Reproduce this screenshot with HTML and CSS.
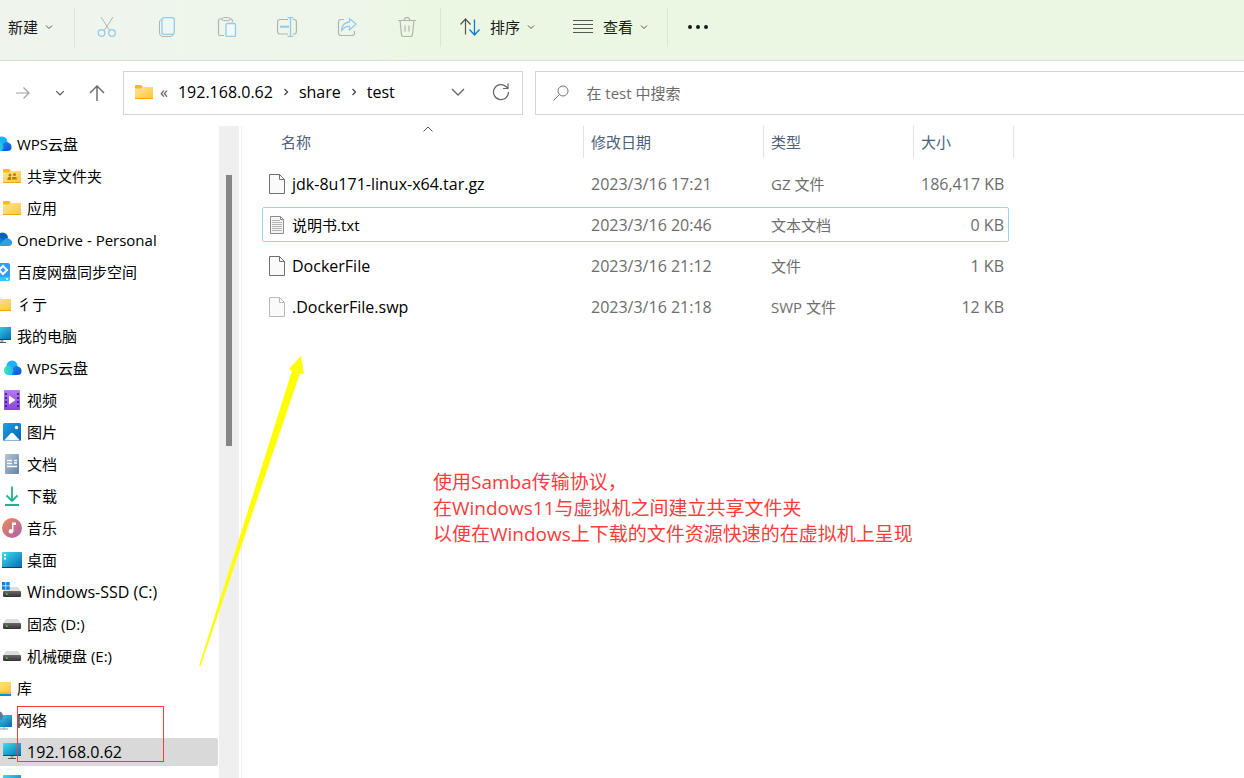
FILE: index.html
```html
<!DOCTYPE html>
<html lang="zh-CN">
<head>
<meta charset="utf-8">
<title>test</title>
<link rel="stylesheet" href="styles.css">
</head>
<body>
<svg class="defs" aria-hidden="true">
  <defs>
    <linearGradient id="gFolder" x1="0" y1="0" x2="1" y2="1"><stop offset="0" stop-color="#ffe69a"/><stop offset="1" stop-color="#ffc536"/></linearGradient>
    <linearGradient id="gScreen" x1="0" y1="0" x2="1" y2="1"><stop offset="0" stop-color="#3ce0e8"/><stop offset="1" stop-color="#0867b8"/></linearGradient>
    <linearGradient id="gVideo" x1="0" y1="0" x2="0" y2="1"><stop offset="0" stop-color="#b57bf0"/><stop offset="1" stop-color="#8645dc"/></linearGradient>
    <linearGradient id="gPic" x1="0" y1="0" x2="1" y2="1"><stop offset="0" stop-color="#1c9fe8"/><stop offset="1" stop-color="#0763b4"/></linearGradient>
    <linearGradient id="gDoc" x1="0" y1="0" x2="1" y2="1"><stop offset="0" stop-color="#b3c6da"/><stop offset="1" stop-color="#6582a4"/></linearGradient>
    <linearGradient id="gMusic" x1="0" y1="0" x2="1" y2="1"><stop offset="0" stop-color="#f08c4e"/><stop offset="1" stop-color="#a95fb5"/></linearGradient>
    <linearGradient id="gWpsL" x1="0" y1="0" x2="1" y2="0"><stop offset="0" stop-color="#3fe8b8"/><stop offset="1" stop-color="#16b9f5"/></linearGradient>
    <linearGradient id="gWpsR" x1="0" y1="0" x2="1" y2="1"><stop offset="0" stop-color="#1a8cff"/><stop offset="1" stop-color="#0a4fd8"/></linearGradient>
    <linearGradient id="gDrive" x1="0" y1="0" x2="0" y2="1"><stop offset="0" stop-color="#6a6a6a"/><stop offset="1" stop-color="#333"/></linearGradient>
  </defs>
  <symbol id="chevron-down" viewBox="0 0 8 8"><path d="M1 2.500 4 5.500 7 2.500" fill="none" stroke="currentColor"/></symbol>
  <symbol id="chevron-right" viewBox="0 0 8 8"><path d="M2.500 1 5.500 4 2.500 7" fill="none" stroke="currentColor" stroke-width="1.300"/></symbol>
  <symbol id="folder" viewBox="0 0 20 20"><path d="M1 4q0-1 1-1h5l2 2h-1v3H1z" fill="#f9b91c"/><path d="M1 6.500h6L8.500 5H19v12H1z" fill="url(#gFolder)"/><path d="M1 16.500h18" stroke="#eda71e"/></symbol>
  <symbol id="monitor" viewBox="0 0 20 20"><path d="M1 1h18v13H1z" fill="url(#gScreen)"/><path d="M1 13.500h18" stroke="#07518f"/><path d="M8.500 14h3v2h-3z" fill="#9aa3aa"/><path d="M6 16.500h8" stroke="#555"/></symbol>
  <symbol id="wps" viewBox="0 0 20 20"><circle cx="10" cy="8" r="5.500" fill="#1fb0fa"/><path d="M10 17 8 13l5-5q6 0 6.500 4.500T15 17z" fill="url(#gWpsR)"/><path d="M5.500 7.500A5 5 0 0 0 5.500 17h4q2.500-3 2-5Q10 7.500 5.500 7.500z" fill="url(#gWpsL)"/></symbol>
  <symbol id="drive" viewBox="0 0 20 20"><path d="M4 5h12l3 5H1z" fill="#dcdde0"/><rect x="1" y="9" width="18" height="6" rx="1" fill="url(#gDrive)"/><path d="M4 12h1.500" stroke="#54e35b" stroke-width="1.500"/></symbol>
  <symbol id="file" viewBox="0 0 16 20"><path d="M.5.5h10l5 5v14H.5z" fill="#fafafa" stroke="currentColor"/><path d="M10.500.5v5h5" fill="none" stroke="currentColor"/></symbol>
</svg>

<div class="toolbar">
  <button class="tool tool-new">新建<svg class="chev"><use href="#chevron-down"/></svg></button>
  <span class="divider"></span>
  <div class="tool-group">
    <button class="tool icon-only" aria-label="剪切"><svg viewBox="0 0 20 20"><g fill="none"><path d="M4 0 13 14M16 0 7 14" stroke="#b3b3ae"/><circle cx="4.500" cy="16" r="3.300" stroke="#93cbec" stroke-width="1.300"/><circle cx="15" cy="16" r="3.300" stroke="#93cbec" stroke-width="1.300"/></g></svg></button>
    <button class="tool icon-only" aria-label="复制"><svg viewBox="0 0 20 20"><path d="M4.500 2.500Q2.500 3 2.500 5v10q0 4.500 4 4.500h7q2 0 2.500-2" fill="none" stroke="#b3b3ae"/><rect x="5" y=".7" width="12.300" height="16.600" rx="2" fill="#eef7f6" stroke="#93cbec" stroke-width="1.300"/></svg></button>
    <button class="tool icon-only" aria-label="粘贴"><svg viewBox="0 0 20 20"><g fill="none"><path d="M7 18.500H3q-1.500 0-1.500-1.500V3.500Q1.500 2 3 2h2m8 0h1q1.500 0 1.500 3" stroke="#b3b3ae" stroke-width="1.200"/><rect x="5" y=".6" width="8" height="3" rx="1.500" stroke="#b3b3ae"/><rect x="9" y="6.500" width="9.500" height="13" rx="1.500" fill="#f3f9f8" stroke="#93cbec" stroke-width="1.300"/></g></svg></button>
    <button class="tool icon-only" aria-label="重命名"><svg viewBox="0 0 20 20"><g fill="none"><path d="M11 2.500H3Q.6 2.500.6 5v9.500Q.6 17 3 17h8M16 2.500h1q2.400 0 2.400 2.500v9.500q0 2.500-2.400 2.500h-1" stroke="#b3b3ae" stroke-width="1.200"/><path d="M3 9.700h9" stroke="#93cbec" stroke-width="2"/><path d="M13.500.5v19M10.500.6h6M10.500 19.400h6" stroke="#93cbec" stroke-width="1.300"/></g></svg></button>
    <button class="tool icon-only" aria-label="共享"><svg viewBox="0 0 20 20"><g fill="none"><path d="M7 2.500H4Q1.500 2.500 1.500 5v11q0 2.500 2.500 2.500h11q2.500 0 2.500-2.500v-2" stroke="#b3b3ae" stroke-width="1.200"/><path d="M12.500 1.500 19 7l-6.500 6V9.500Q7.500 9 4.500 14 5 5.500 12.500 5z" stroke="#93cbec" stroke-width="1.300" stroke-linejoin="round"/></g></svg></button>
    <button class="tool icon-only" aria-label="删除"><svg viewBox="0 0 20 20"><path d="M1 3.500h18M3 3.500l1.500 14q.2 2 2 2h7q1.800 0 2-2L17 3.500M7 3.500Q7 .6 10 .6t3 2.900M8 8.500v6M12 8.500v6" fill="none" stroke="#b3b3ae" stroke-width="1.200"/></svg></button>
  </div>
  <span class="divider"></span>
  <button class="tool labelled"><svg viewBox="0 0 20 20"><path d="M5.500 17.500V2.500M.5 7.500l5-5.500 5 5.500" fill="none" stroke="#555" stroke-width="1.200"/><path d="M14.500 2.500v15M9.500 12.500l5 5.500 5-5.500" fill="none" stroke="#0b7bd6" stroke-width="1.300"/></svg>排序<svg class="chev"><use href="#chevron-down"/></svg></button>
  <button class="tool labelled"><svg viewBox="0 0 20 20"><path d="M0 3.500h20M0 7.500h20M0 11.500h20M0 15.500h20" stroke="#555"/></svg>查看<svg class="chev"><use href="#chevron-down"/></svg></button>
  <span class="divider"></span>
  <button class="tool icon-only" aria-label="更多"><svg viewBox="0 0 20 20"><g fill="#1a1a1a"><circle cx="2" cy="10" r="2"/><circle cx="10" cy="10" r="2"/><circle cx="18" cy="10" r="2"/></g></svg></button>
</div>

<div class="navbar">
  <div class="nav-buttons">
    <button class="nav" aria-label="前进"><svg width="16" height="16" viewBox="0 0 16 16"><path d="M1 8h13M8.500 2.500 14 8l-5.500 5.500" fill="none" stroke="#a0a0a0" stroke-width="1.200"/></svg></button>
    <button class="nav" aria-label="最近的位置"><svg width="10" height="10"><use href="#chevron-down"/></svg></button>
    <button class="nav" aria-label="向上"><svg width="16" height="16" viewBox="0 0 16 16"><path d="M8 16V1M1 8l7-7 7 7" fill="none" stroke="#666" stroke-width="1.400"/></svg></button>
  </div>
  <nav class="address" aria-label="地址">
    <svg class="icon"><use href="#folder"/></svg>
    <span class="back">«</span>
    <a href="#">192.168.0.62</a><svg class="sep"><use href="#chevron-right"/></svg>
    <a href="#">share</a><svg class="sep"><use href="#chevron-right"/></svg>
    <a href="#">test</a>
    <button class="addr-btn drop" aria-label="历史记录"><svg width="14" height="14" viewBox="0 0 14 14"><path d="M1 4l6 6 6-6" fill="none" stroke="#666" stroke-width="1.300"/></svg></button>
    <button class="addr-btn" aria-label="刷新"><svg width="18" height="18" viewBox="0 0 18 18"><path d="M16.500 9A7.500 7.500 0 1 1 14 3.500L16 5.500M16 .5v5h-5" fill="none" stroke="#666" stroke-width="1.200"/></svg></button>
  </nav>
  <label class="search">
    <svg width="16" height="16" viewBox="0 0 16 16"><circle cx="10" cy="6" r="5" fill="none" stroke="#777"/><path d="M6.500 9.500.5 15.500" stroke="#777"/></svg>
    <input type="search" placeholder="在 test 中搜索" aria-label="在 test 中搜索">
  </label>
</div>

<div class="main">
  <aside class="sidebar">
    <ul class="tree">
      <li class="root"><svg class="icon"><use href="#wps"/></svg>WPS云盘</li>
      <li><svg class="icon" viewBox="0 0 20 20"><use href="#folder" width="20" height="20"/><g fill="#b87a12"><circle cx="8" cy="9" r="1.500"/><circle cx="12.500" cy="8.500" r="1.500"/><path d="M5.500 14v-1.500q0-1.500 1.500-1.500h2v3zM10 13.500V11h3.500q1.500 0 1.500 2.500z"/></g></svg>共享文件夹</li>
      <li><svg class="icon"><use href="#folder"/></svg>应用</li>
      <li class="root"><svg class="icon" viewBox="0 0 20 20"><path d="M5 8a5.500 5.500 0 0 1 11 0l-4 4z" fill="#0a62ba"/><path d="M5 16a4.500 4.500 0 0 1 0-9q4 0 7 4l-3 5z" fill="#0d7fd4"/><path d="M5 16l8-7q1.500-1.500 3.500-.5Q20 9.500 20 12.500 20 16 16.500 16z" fill="#28a0e8"/></svg>OneDrive - Personal</li>
      <li class="root"><svg class="icon" viewBox="0 0 20 20"><rect x="0" y="1" width="18" height="18" rx="2" fill="#2f9bff"/><path d="M0 15h18v2q0 2-2 2H2q-2 0-2-2z" fill="#35c8f5"/><path d="M7 8l4-4 4 4-4 4z" fill="none" stroke="#fff" stroke-width="2"/><circle cx="15" cy="17" r="1" fill="#fff"/></svg>百度网盘同步空间</li>
      <li class="root"><svg class="icon"><use href="#folder"/></svg>彳亍</li>
      <li class="root"><svg class="icon"><use href="#monitor"/></svg>我的电脑</li>
      <li><svg class="icon"><use href="#wps"/></svg>WPS云盘</li>
      <li><svg class="icon" viewBox="0 0 20 20"><rect x="2" width="16" height="20" rx="1" fill="url(#gVideo)"/><path d="M4 3v14M16 3v14" stroke="#4a2391" stroke-width="2" stroke-dasharray="2 2"/><path d="M7 5.500 13.500 10 7 14.500z" fill="#fff"/></svg>视频</li>
      <li><svg class="icon" viewBox="0 0 20 20"><rect x="1" y="1" width="18" height="18" rx="1.500" fill="url(#gPic)"/><path d="M2 18.500 8.500 11.500q1.500-1.500 3 0L18 18.500z" fill="#f7fbff"/><circle cx="14.500" cy="5.500" r="1.700" fill="#fff"/></svg>图片</li>
      <li><svg class="icon" viewBox="0 0 20 20"><rect x="3" width="14" height="20" rx="1" fill="url(#gDoc)"/><path d="M5 6.500h5M5 9.500h5M5 12.500h10M12 6.500h3M12 9h3" stroke="#fff" stroke-width="1.500"/></svg>文档</li>
      <li><svg class="icon" viewBox="0 0 20 20"><path d="M10 .5V15M4.500 9.500 10 15l5.500-5.500M3 19h14" fill="none" stroke="#20b28f" stroke-width="1.800"/></svg>下载</li>
      <li><svg class="icon" viewBox="0 0 20 20"><circle cx="10" cy="10" r="10" fill="url(#gMusic)"/><path d="M10 4.500h4v2.500h-2.500V13H10z" fill="#fff"/><circle cx="9" cy="13.300" r="2.300" fill="#fff"/></svg>音乐</li>
      <li><svg class="icon" viewBox="0 0 20 20"><rect y="2" width="20" height="16" rx="1" fill="url(#gScreen)"/><path d="M0 17.500h20" stroke="#073f75"/><path d="M3 4v2M3 7.500v2" stroke="#fff" stroke-width="2"/></svg>桌面</li>
      <li class="latin"><svg class="icon" viewBox="0 0 20 20"><use href="#drive" width="20" height="20"/><path d="M0 0h3.500v3.500H0zM4.200 0h3.500v3.500H4.200zM0 4.200h3.500v3.500H0zM4.200 4.200h3.500v3.500H4.200z" fill="#0d86dc"/></svg>Windows-SSD (C:)</li>
      <li><svg class="icon"><use href="#drive"/></svg>固态 (D:)</li>
      <li><svg class="icon"><use href="#drive"/></svg>机械硬盘 (E:)</li>
      <li class="root"><svg class="icon" viewBox="0 0 20 20"><path d="M1 4h18v12H1z" fill="url(#gFolder)"/><path d="M1 15h18" stroke="#eda71e"/><path d="M1 17h18" stroke="#1787cf" stroke-width="2"/></svg>库</li>
      <li class="root"><svg class="icon" viewBox="0 0 20 20"><path d="M3 5h17v12H3z" fill="url(#gScreen)"/><path d="M7 19h9M12 17v2" stroke="#8c969e"/><circle cx="6" cy="6" r="5" fill="#527f9c"/></svg>网络</li>
      <li class="selected latin"><svg class="icon"><use href="#monitor"/></svg>192.168.0.62</li>
      <li><svg class="icon"><use href="#monitor"/></svg></li>
    </ul>
    <div class="scrollbar"><div class="thumb"></div></div>
    <div class="callout-box"></div>
  </aside>

  <section class="content">
    <table class="files">
      <colgroup><col class="c-name"><col class="c-date"><col class="c-type"><col class="c-size"></colgroup>
      <thead>
        <tr><th class="name">名称<svg class="sorted" viewBox="0 0 10 6"><path d="M.5 5.500 5 1l4.500 4.500" fill="none" stroke="#555"/></svg></th><th>修改日期</th><th>类型</th><th>大小</th></tr>
      </thead>
      <tbody>
        <tr><td class="latin"><span class="file"><svg><use href="#file"/></svg>jdk-8u171-linux-x64.tar.gz</span></td><td class="latin">2023/3/16 17:21</td><td>GZ 文件</td><td class="latin">186,417 KB</td></tr>
        <tr class="focused"><td><span class="file"><svg viewBox="0 0 16 20"><path d="M1.500 1.500h10l3 3v14h-13z" fill="#f4f4f4" stroke="#8c8c8c"/><path d="M11.500 1.500v3h3" fill="none" stroke="#8c8c8c"/><path d="M3 5.500h8M3 7.500h10M3 9.500h10M3 11.500h10M3 13.500h10M3 15.500h10" stroke="#b4b4b4"/></svg>说明书.txt</span></td><td class="latin">2023/3/16 20:46</td><td>文本文档</td><td class="latin">0 KB</td></tr>
        <tr><td class="latin"><span class="file"><svg><use href="#file"/></svg>DockerFile</span></td><td class="latin">2023/3/16 21:12</td><td>文件</td><td class="latin">1 KB</td></tr>
        <tr><td class="latin"><span class="file hidden-file"><svg><use href="#file"/></svg>.DockerFile.swp</span></td><td class="latin">2023/3/16 21:18</td><td>SWP 文件</td><td class="latin">12 KB</td></tr>
      </tbody>
    </table>
    <p class="note">使用Samba传输协议，<br>在Windows11与虚拟机之间建立共享文件夹<br>以便在Windows上下载的文件资源快速的在虚拟机上呈现</p>
  </section>
  <svg class="arrow" width="106" height="311" viewBox="0 0 106 311"><path d="M102 0 90 13l3 2L0 310h1.500L101 17l4 1z" fill="#ff0"/></svg>
</div>
</body>
</html>
```

FILE: styles.css
```css
* { box-sizing: border-box; }

body {
  margin: 0;
  height: 100vh;
  display: flex;
  flex-direction: column;
  overflow: hidden;
  background: #fff;
  color: #000;
  font: 15px/20px "Open Sans", "Noto Sans CJK SC", sans-serif;
}

button {
  border: 0;
  padding: 0;
  background: none;
  font: inherit;
  color: inherit;
}

svg { flex: none; display: block; }
a { color: inherit; text-decoration: none; }
.defs { position: absolute; width: 0; height: 0; }
.latin { font-size: 16px; }

/* Command bar */
.toolbar {
  flex: none;
  display: flex;
  align-items: center;
  height: 61px;
  padding-bottom: 6px;
  border-bottom: 1px solid #d5e1d2;
  background: linear-gradient(90deg, #eff5ed 0, #eef6ea 28%, #ebf7e3 34%, #ebf7e3 100%);
  color: #1a1a1a;
}

.divider {
  width: 1px;
  height: 39px;
  background: #dbe5d6;
}

.tool { display: flex; align-items: center; gap: 10px; }
.tool svg { width: 20px; height: 20px; }
.tool .chev { width: 8px; height: 8px; color: #555; }
.tool-new { padding: 0 21px 0 8px; gap: 7px; }
.tool-group { display: flex; padding: 0 3px 0 2px; }
.icon-only { width: 60px; justify-content: center; }
.labelled { gap: 10px; padding: 0 19px; }
.labelled .chev { margin-left: -3px; }

/* Navigation and address row */
.navbar {
  flex: none;
  display: flex;
  height: 65px;
  padding: 10px 0 11px;
}

.nav-buttons { display: flex; padding-left: 4px; width: 123px; }
.nav { width: 37px; display: flex; align-items: center; justify-content: center; color: #555; }

.address,
.search {
  display: flex;
  align-items: center;
  border: 1px solid #d5d5d5;
}

.address { flex: 9 1 0; padding: 0 0 2px 10px; font-size: 16px; }
.icon { width: 20px; height: 20px; }
.back { padding: 0 10px 0 6px; color: #555; }
.sep { width: 8px; height: 8px; margin: 0 9px; color: #444; }
.addr-btn { width: 43px; display: flex; justify-content: center; }
.drop { margin-left: auto; }

.search {
  flex: 16 1 0;
  gap: 17px;
  margin-left: 12px;
  padding-left: 17px;
  border-right: 0;
}

.search input {
  flex: 1;
  border: 0;
  outline: 0;
  padding: 0;
  font: inherit;
}

.search input::placeholder { color: #6b6b6b; }

/* Panes */
.main {
  flex: 1;
  min-height: 0;
  display: flex;
  position: relative;
}

.sidebar {
  flex: none;
  display: flex;
  position: relative;
  width: 242px;
  border-right: 1px solid #f0f0f0;
  overflow: hidden;
}

.tree {
  flex: 1;
  margin: 0;
  padding: 2px 1px 0 0;
  list-style: none;
}

.tree li {
  display: flex;
  align-items: center;
  gap: 5px;
  height: 28px;
  margin: 2px 0 4px;
  padding-left: 2px;
  white-space: nowrap;
}

.tree .root { padding-left: 0; }
.tree .root .icon { margin-left: -8px; }
.tree .selected { background: #d9d9d9; border-radius: 0 2px 2px 0; }

.scrollbar { width: 20px; margin-right: 2px; background: #efefef; }
.thumb { width: 6px; height: 271px; margin: 49px 0 0 7px; background: #858585; }

.callout-box {
  position: absolute;
  left: 17px;
  top: 580px;
  width: 147px;
  height: 56px;
  border: 1px solid #fa3c3c;
}

.content { flex: 1; position: relative; padding-left: 20px; }

/* File list */
.files { border-collapse: separate; border-spacing: 0; table-layout: fixed; width: 752px; }
.c-name { width: 322px; }
.c-date { width: 180px; }
.c-type { width: 150px; }
.c-size { width: 100px; }

.files th {
  position: relative;
  height: 32px;
  padding: 0 7px;
  border-right: 1px solid #e2e2e2;
  font-weight: 400;
  text-align: left;
  color: #4c607a;
}

.files th.name { padding-left: 19px; }
.sorted { position: absolute; left: 50%; top: 0; width: 10px; height: 6px; }
.files thead::after { content: ""; display: block; height: 6px; }
.files td { height: 41px; padding: 0 7px 2px; color: #6d6d6d; white-space: nowrap; }
.files td:first-child { color: #000; }
.files td:last-child { padding-right: 10px; text-align: right; }
.file { display: flex; align-items: center; gap: 7px; }
.file svg { width: 16px; height: 20px; color: #6f6f6f; }
.file.hidden-file svg { color: #b8b8b8; }
.focused { position: relative; }

.focused::after {
  content: "";
  position: absolute;
  inset: 2px 5px 4px 0;
  border: 1px solid #99d1ff;
  border-radius: 2px;
}

/* Annotations */
.note {
  position: absolute;
  left: 191px;
  top: 343px;
  margin: 0;
  color: #fa3c3c;
  font-size: 19px;
  line-height: 26px;
}

.arrow { position: absolute; left: 199px; top: 230px; }
```
